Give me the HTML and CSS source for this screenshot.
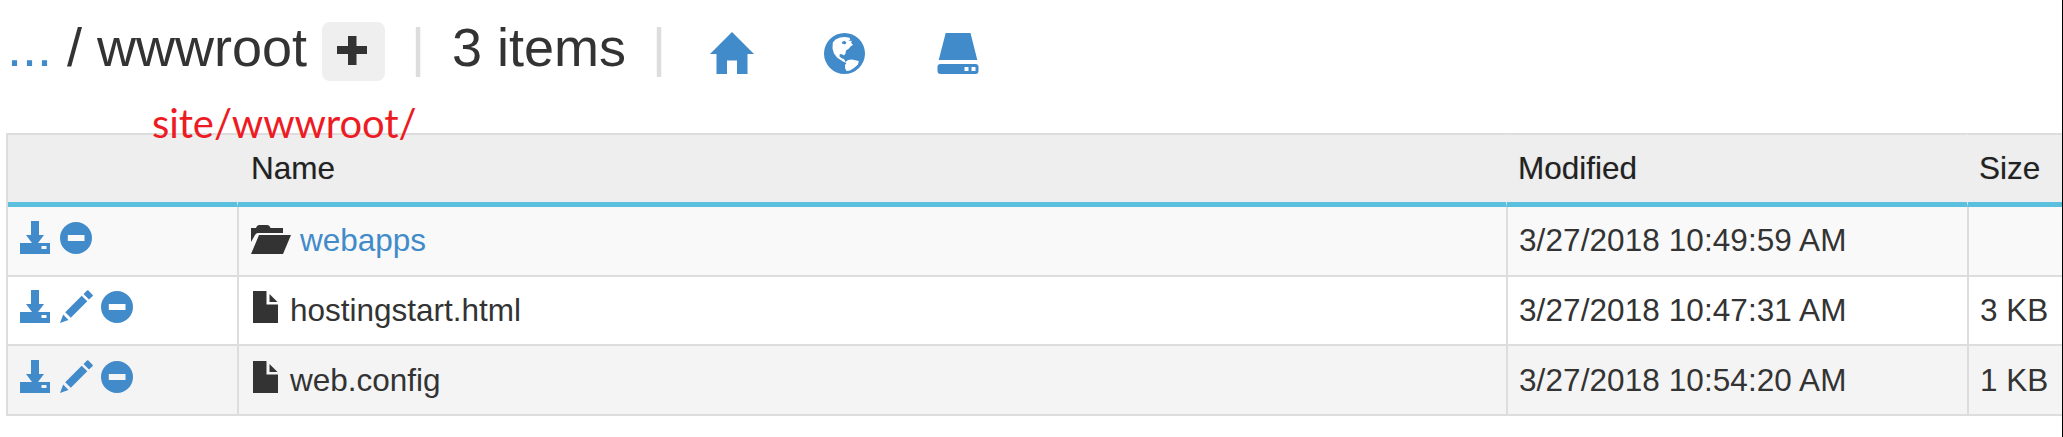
FILE: index.html
```html
<!DOCTYPE html>
<html lang="en">
<head>
<meta charset="utf-8">
<title>wwwroot</title>
<link rel="stylesheet" href="styles.css">
</head>
<body>
<svg class="defs" aria-hidden="true">
  <symbol id="download" viewBox="0 0 30 33"><path fill-rule="evenodd" d="M11 0h8v14h5l-6 8h12v11H0V22h12L6 14h5zM21.500 25v3h5v-3z"/></symbol>
  <symbol id="minus" viewBox="0 0 32 32"><path fill-rule="evenodd" d="M16 0a16 16 0 1 1 0 32a16 16 0 1 1 0-32zM7.800 13v6h16.700v-6z"/></symbol>
  <symbol id="pencil" viewBox="0 0 33 33"><path d="M0 33L3.200 24.500L8.500 30zM5.200 22.200L21.700 5.700L27.300 11.300L10.800 27.800zM23.500 4L27 .5Q27.700 0 28.400.5L32.500 4.700Q33.300 5.500 32.500 6.300L29 9.600z"/></symbol>
  <symbol id="folder" viewBox="0 0 40 29"><path d="M0 17V3H5Q6 0 8.500 0H16Q18.500 0 19.500 3H32V8H7Q5 8 4 10zM8 10H40L32 29H0z"/></symbol>
  <symbol id="file" viewBox="0 0 25 32"><path d="M0 0H13.500V13.500H25V32H0zM16.500 3L24.500 11H16.500z"/></symbol>
  <symbol id="plus" viewBox="0 0 30 29"><path d="M11 0h8.500v10H30v8H19.500v11H11V18H0v-8h11z"/></symbol>
  <symbol id="home" viewBox="0 0 44 42"><path d="M22 0L44 22H37.500V42H27V28.500H17V42H6.500V22H0z"/></symbol>
  <symbol id="globe" viewBox="0 0 41 41"><path d="M20.500 0a20.500 20.500 0 1 1 0 41a20.500 20.500 0 1 1 0-41z"/><path class="land" d="M11.500 6.500L16 4.500L21 4L25.500 4.700L26.300 6.500L24.300 7.500L28 8L27 9.500L29 12L27 13L25 15.500L22 17.500L21.500 20.500L20 22.500L18.500 21.500L15.800 21L15.500 23.500L18 25.500L20 26L21.500 29L24 27L28 26.500L34.800 28L34 31.500L30 35L26 37.500L22.500 38L21 35L21 32L22.500 30L19 28.500L13 24.500L10 20.500L8.500 15.500L8.800 9.500z"/><path d="M18 9L20.500 7.800L22.500 9.500L21 11.500L18 10.500z"/></symbol>
  <symbol id="drive" viewBox="0 0 42 41"><path fill-rule="evenodd" d="M8.700 0H33.500L40.300 27H1.700zM3.500 31H38.500Q41.500 31 41.500 34V38Q41.500 41 38.500 41H3.500Q.5 41 .5 38V34Q.5 31 3.500 31zM27.500 34v4h4v-4zM34.500 34v4h4v-4z"/></symbol>
</svg>

<main class="page">
  <header class="toolbar">
    <h1 class="crumbs"><a class="link">...</a> / wwwroot</h1>
    <button class="add" aria-label="Add"><svg class="i-plus"><use href="#plus"/></svg></button>
    <span class="sep sep-first">|</span>
    <span class="count">3 items</span>
    <span class="sep">|</span>
    <nav class="shortcuts">
      <svg class="i-home"><use href="#home"/></svg>
      <svg class="i-globe"><use href="#globe"/></svg>
      <svg class="i-drive"><use href="#drive"/></svg>
    </nav>
    <span class="note">site/wwwroot/</span>
  </header>

  <table class="files">
    <colgroup><col class="c-actions"><col class="c-name"><col class="c-date"><col class="c-size"></colgroup>
    <thead><tr><th></th><th>Name</th><th>Modified</th><th>Size</th></tr></thead>
    <tbody>
      <tr class="row">
        <td><div class="actions"><svg class="i-download"><use href="#download"/></svg><svg class="i-minus"><use href="#minus"/></svg></div></td>
        <td><div class="name"><svg class="i-folder"><use href="#folder"/></svg><a class="link">webapps</a></div></td>
        <td>3/27/2018 10:49:59 AM</td><td></td>
      </tr>
      <tr class="row row-plain">
        <td><div class="actions"><svg class="i-download"><use href="#download"/></svg><svg class="i-pencil"><use href="#pencil"/></svg><svg class="i-minus"><use href="#minus"/></svg></div></td>
        <td><div class="name"><svg class="i-file"><use href="#file"/></svg><span>hostingstart.html</span></div></td>
        <td>3/27/2018 10:47:31 AM</td><td>3 KB</td>
      </tr>
      <tr class="row row-hover">
        <td><div class="actions"><svg class="i-download"><use href="#download"/></svg><svg class="i-pencil"><use href="#pencil"/></svg><svg class="i-minus"><use href="#minus"/></svg></div></td>
        <td><div class="name"><svg class="i-file"><use href="#file"/></svg><span>web.config</span></div></td>
        <td>3/27/2018 10:54:20 AM</td><td>1 KB</td>
      </tr>
    </tbody>
  </table>
</main>
</body>
</html>
```

FILE: styles.css
```css
* { box-sizing: border-box; }
body {
  margin: 0;
  background: #fff;
  color: #333;
  font: 31.5px/45px "Liberation Sans", Arial, sans-serif;
}
.defs { position: absolute; width: 0; height: 0; }
svg { display: block; flex: none; fill: currentColor; }
.page {
  height: 437px;
  padding-left: 6px;
  border-right: 1px solid #000;
  overflow: hidden;
}
.link { color: #428bca; }

.toolbar {
  position: relative;
  display: flex;
  align-items: flex-start;
  height: 133px;
  padding: 17px 0 0 1px;
  font-size: 54px;
  line-height: 60px;
  white-space: nowrap;
}
.crumbs { width: 315px; margin: 0; font: inherit; }
.add {
  display: flex;
  width: 63px;
  height: 59px;
  margin-top: 5px;
  padding: 14px 15px;
  border: 0;
  border-radius: 8px;
  background: #efefef;
  color: #333;
}
.sep { width: 58px; color: #ddd; }
.sep-first { width: 41px; margin-left: 26px; }
.count { width: 200px; }
.shortcuts {
  display: flex;
  align-items: flex-end;
  height: 57px;
  color: #428bca;
}
.land { fill: #fff; }
.i-plus { width: 30px; height: 29px; }
.i-home { width: 44px; height: 42px; }
.i-globe { width: 41px; height: 41px; margin-left: 70px; }
.i-drive { width: 42px; height: 41px; margin-left: 72px; }
.note {
  position: absolute;
  left: 146px;
  top: 97px;
  color: #ed1c24;
  font: 40px/52px Lato, Calibri, sans-serif;
  letter-spacing: -0.1px;
}

.files {
  width: 2056px;
  table-layout: fixed;
  border-collapse: separate;
  border-spacing: 0;
  border-left: 2px solid #ddd;
}
.c-actions { width: 229px; }
.c-name { width: 1269px; }
.c-date { width: 461px; }
.c-size { width: 95px; }
th {
  height: 74px;
  padding: 11px 0 0 12px;
  border-top: 2px solid #ddd;
  border-bottom: 5px solid #5bc0de;
  background: #eee;
  color: #222;
  font-weight: normal;
  text-align: left;
  text-shadow: 0 0 1px rgba(0, 0, 0, 0.25);
  vertical-align: top;
  white-space: nowrap;
}
th:nth-child(2) { padding-left: 13px; }
th + th { border-left: 1px solid #eee; padding-left: 11px; }
td {
  height: 70px;
  padding: 11px 0 0 11px;
  border-bottom: 2px solid #ddd;
  border-left: 2px solid #ddd;
  background: #f9f9f9;
  vertical-align: top;
  white-space: nowrap;
}
td:nth-child(3) { letter-spacing: 0.08px; }
td:first-child { padding: 14px 0 0 12px; border-left: 0; }
td:nth-child(2) { padding-left: 12px; }
.row-plain td { height: 69px; background: #fff; }
.row-plain td:first-child { padding-top: 13px; }
.row-hover td { padding-top: 12px; background: #f4f4f4; }
.row-hover td:first-child { padding-top: 14px; }
.actions { display: flex; align-items: flex-end; gap: 10px; height: 33px; color: #428bca; }
.i-download { width: 30px; height: 33px; }
.i-pencil { width: 33px; height: 33px; }
.i-minus { width: 32px; height: 32px; }
.i-pencil + .i-minus { margin-left: -2px; }
.name { display: flex; }
.i-folder { width: 40px; height: 29px; margin: 7px 9px 0 0; }
.i-file { width: 25px; height: 32px; margin: 3px 12px 0 2px; }
```
